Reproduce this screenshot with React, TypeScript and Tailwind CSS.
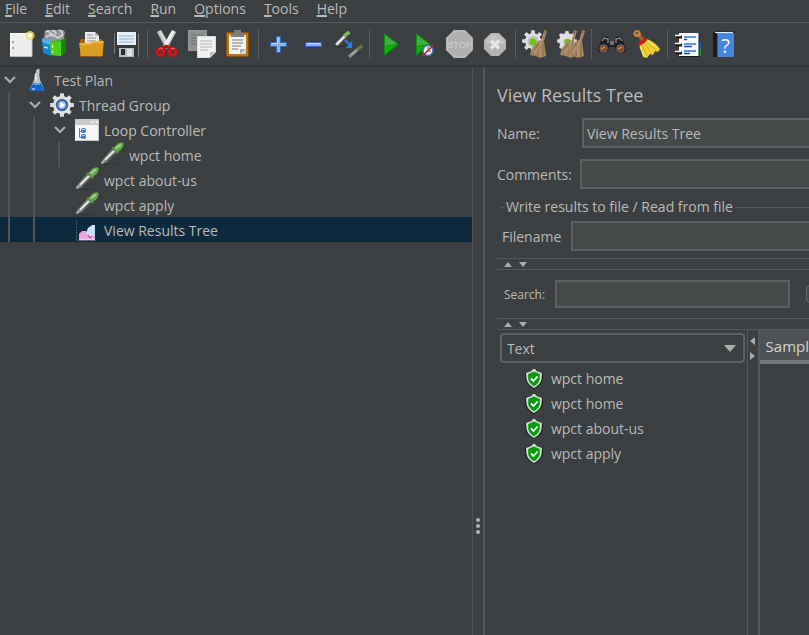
import type { ReactNode } from "react";

const menus = ["File", "Edit", "Search", "Run", "Options", "Tools", "Help"];

function ToolButton({ label, children }: { label: string; children: ReactNode }) {
  return (
    <button type="button" aria-label={label} className="h-[30px] w-[35px] shrink-0">
      <svg viewBox="0 0 35 30" className="h-[30px] w-[35px]" aria-hidden="true">
        {children}
      </svg>
    </button>
  );
}

function Separator() {
  return (
    <div className="flex h-[30px] w-1.5 shrink-0 justify-center">
      <span className="w-px bg-[#5a5c5e]" />
    </div>
  );
}

function gearPoints(cx: number, cy: number, outer: number, inner: number, teeth: number) {
  const points: string[] = [];
  for (let i = 0; i < teeth; i++) {
    const base = (i / teeth) * Math.PI * 2 - Math.PI / 2;
    const steps: [number, number][] = [
      [-0.3, inner],
      [-0.2, outer],
      [0.2, outer],
      [0.3, inner],
    ];
    for (const [offset, radius] of steps) {
      const angle = base + (offset * Math.PI * 2) / teeth;
      points.push(`${(cx + Math.cos(angle) * radius).toFixed(2)},${(cy + Math.sin(angle) * radius).toFixed(2)}`);
    }
  }
  return points.join(" ");
}

function Pipette() {
  return (
    <>
      <path d="M1 20L4 16L13 6L17 10L7 20L2 22Z" fill="#7c807e" />
      <path d="M5 18L14.500 8.500" stroke="#e8eae6" strokeWidth="2" />
      <path d="M6.500 19L15 11" stroke="#4a4e48" strokeWidth="1" />
      <path d="M1.500 21.500L4.500 18.500" stroke="#a9aba9" strokeWidth="1.800" />
      <path d="M12 5.500L18.500 11" stroke="#4d7f3a" strokeWidth="2.600" />
      <path d="M13 6.500L17 2Q22 -1 23.500 1.500Q24 4.500 21 7.500L17 10.500Z" fill="#64a54b" />
      <path d="M15.500 6.500L21 2.500" stroke="#a5d48d" strokeWidth="2" />
      <path d="M3 22.500H18" stroke="#2f3133" strokeWidth="0.900" />
    </>
  );
}

function BristleBrush() {
  return (
    <>
      <path d="M26 1L29 2L26 12L28 27L22 29L18 27L12 26L14 19L20 12L24 11Z" fill="#a58762" />
      <path d="M27 2L24 14M23 14L20 27M25 15L25 27M20 15L15 25" stroke="#806443" strokeWidth="0.800" fill="none" />
      <path d="M26 5L22 17L22 27M20 18L16 24" stroke="#c9ab82" strokeWidth="0.900" fill="none" />
    </>
  );
}

function Toolbar() {
  return (
    <div role="toolbar" aria-label="Main" className="flex h-[42px] items-center overflow-hidden px-1">
      <ToolButton label="New">
        <rect x="6.500" y="4.500" width="21" height="23" fill="#eeeeec" stroke="#fafafa" />
        <path d="M6 27.500H28V5" stroke="#bcbcba" fill="none" />
        <path d="M8 13h2M8 19h2" stroke="#8d8f90" strokeWidth="1.500" />
        <circle cx="26" cy="6.500" r="4.500" fill="#efdf63" opacity="0.800" />
        <circle cx="26" cy="6.500" r="2.200" fill="#fffde0" />
      </ToolButton>
      <ToolButton label="Templates">
        <path d="M5 9L6 2L9 1H24L26 3L25 10L15 14L5 10Z" fill="#8f9496" />
        <path d="M7 3Q9 0 11 4T14 7M13 2Q16 1 17 5M20 1Q24 2 23 6M7 8L13 5L19 9L24 6" stroke="#d3d7d9" strokeWidth="1.600" fill="none" />
        <path d="M3 9L12 12V27L4 24Z" fill="#1688cf" />
        <path d="M3 9L12 12V16L3 13Z" fill="#4eb3ec" />
        <path d="M5 18L9 19" stroke="#b5e3fb" strokeWidth="1.500" />
        <path d="M11 13L22 11L27 9V23L22 27L12 26Z" fill="#2fa60c" />
        <path d="M11 13L22 12V27L12 26Z" fill="#52cf17" />
        <path d="M22 12L27 9V23L22 27Z" fill="#1c8009" />
        <path d="M13.500 16V19M13.500 22V24" stroke="#d4ffb9" strokeWidth="1.300" />
      </ToolButton>
      <ToolButton label="Open">
        <path d="M6 12Q6 10 8 10H26Q29 10 29 13V27H6Z" fill="#9b6a10" />
        <path d="M11 3H21L25 7V18H11Z" fill="#ececec" />
        <path d="M21 3V7H25" fill="#b3b5b6" />
        <path d="M13 6h6M13 9h9M13 12h9" stroke="#8a8d8f" strokeWidth="1.200" />
        <path d="M5 14H16L19 12H30L28 28H7Z" fill="#d99d20" />
        <path d="M6 15H16.500L19.500 13H29" stroke="#f6cf6c" fill="none" />
        <path d="M7 27.500H28" stroke="#8b600c" />
      </ToolButton>
      <ToolButton label="Save">
        <path d="M5 4Q5 3 6 3H29Q30 3 30 4V28H8L5 25Z" fill="#35383b" />
        <path d="M5.500 4V24.500M29.500 4V28" stroke="#7a7e81" />
        <rect x="8" y="3" width="19" height="13" fill="#e9f0f7" />
        <path d="M10 7h15M10 10h15M10 13h15" stroke="#8ab0d4" strokeWidth="1.200" />
        <rect x="10" y="19" width="15" height="9" fill="#b9bbbc" />
        <rect x="12" y="20" width="4" height="6" fill="#292b2d" />
        <path d="M18 20h5v7h-5z" fill="#dfe0e0" />
      </ToolButton>
      <Separator />
      <ToolButton label="Cut">
        <path d="M7 3L11 1L20 17L16 20Z" fill="#d4d6d6" />
        <path d="M26 3L22 1L13 17L17 20Z" fill="#f0f1f1" />
        <path d="M8 3L16 18M25 3L17 18" stroke="#959899" strokeWidth="0.700" />
        <path d="M12 20Q16.500 15 21 20" stroke="#b80f0f" strokeWidth="3.500" fill="none" />
        <ellipse cx="10.500" cy="23" rx="3.200" ry="3.500" fill="none" stroke="#d01515" strokeWidth="3" />
        <ellipse cx="22.500" cy="23" rx="3.200" ry="3.500" fill="none" stroke="#d01515" strokeWidth="3" />
        <path d="M9 20Q11 18 13 20M21 20Q23 18 25 20" stroke="#ff6b65" fill="none" />
      </ToolButton>
      <ToolButton label="Copy">
        <rect x="3.500" y="1.500" width="18" height="20" fill="#8f9293" stroke="#979a9b" />
        <path d="M6 6h12M6 9h12M6 12h10M6 15h7" stroke="#696c6e" strokeWidth="1" />
        <path d="M12.500 7.500H30.500V23L25 28.500H12.500Z" fill="#f1f1f0" stroke="#dcdddc" />
        <path d="M15 12h12M15 15h12M15 18h12M15 21h8" stroke="#b4b6b7" strokeWidth="1" />
        <path d="M25 28V23H30Z" fill="#bfc1c0" />
      </ToolButton>
      <ToolButton label="Paste">
        <rect x="6.500" y="3.500" width="22" height="24" rx="1" fill="#b97712" stroke="#835007" />
        <rect x="9" y="6" width="17" height="19" fill="#d9d9d8" />
        <path d="M11 4H14V1H21V4H24V8H11Z" fill="#7b7f80" />
        <path d="M9 8H26V20L21 25H9Z" fill="#f4f4f4" />
        <path d="M12 11h11M12 14h11M12 17h9M12 20h6" stroke="#75797b" strokeWidth="1.200" />
        <path d="M20 25V20H26Z" fill="#a9abab" />
      </ToolButton>
      <Separator />
      <ToolButton label="Expand all">
        <path d="M15.500 7.500H19.500V13.500H25.500V17.500H19.500V23.500H15.500V17.500H9.500V13.500H15.500Z" fill="#8cb4e6" stroke="#2f68b4" />
        <path d="M16.500 9V14.500H11" stroke="#c5dcf7" fill="none" />
      </ToolButton>
      <ToolButton label="Collapse all">
        <rect x="9.500" y="13.500" width="16" height="4" fill="#8cb4e6" stroke="#2f68b4" />
        <path d="M11 14.500H24" stroke="#c5dcf7" />
      </ToolButton>
      <ToolButton label="Toggle">
        <path d="M5 16L15 6" stroke="#8b8e8c" strokeWidth="3.500" />
        <path d="M5.500 15.500L15 6" stroke="#eef0ec" strokeWidth="1.800" />
        <path d="M13 7L18.500 3" stroke="#79b75b" strokeWidth="3.600" />
        <path d="M6 17.500H15" stroke="#242628" />
        <path d="M14 11L19 16" stroke="#2a7df0" strokeWidth="2" />
        <path d="M21 12V19H14.500Z" fill="#2a7df0" />
        <path d="M18 28L27 20" stroke="#818482" strokeWidth="3.500" />
        <path d="M20 26L27 20" stroke="#b0b3b0" strokeWidth="1.500" />
        <path d="M26 21L31 16.500" stroke="#577b49" strokeWidth="3.600" />
      </ToolButton>
      <Separator />
      <ToolButton label="Start">
        <path d="M12 4L27 15.500L12 27Z" fill="#079307" />
        <path d="M13 6L25 15L13 17Z" fill="#3fae3f" />
        <path d="M13 18L24 16L13 25Z" fill="#08b808" />
      </ToolButton>
      <ToolButton label="Start no pauses">
        <path d="M9 4L24 15.500L9 27Z" fill="#079307" />
        <path d="M10 6L22 15L10 17Z" fill="#3fae3f" />
        <path d="M10 18L17 17L10 25Z" fill="#08b808" />
        <circle cx="21" cy="21.500" r="5" fill="#eef2f6" stroke="#3d79bd" strokeWidth="1.500" />
        <path d="M21 18V22H24" stroke="#2c5c94" fill="none" />
        <path d="M15.500 27L26.500 16" stroke="#dc2020" strokeWidth="1.700" />
      </ToolButton>
      <ToolButton label="Stop">
        <path d="M12 1H23L31 9V21L23 29H12L4 21V9Z" fill="#b9b9b9" />
        <path d="M12.500 2.500H22.500L29.500 9.500V20.500L22.500 27.500H12.500L5.500 20.500V9.500Z" fill="#b0b0b0" stroke="#bdbdbd" />
        <text x="17.500" y="19" textAnchor="middle" fontSize="9" fontWeight="700" fontFamily="'Liberation Sans', sans-serif" fill="#c9c9c9">
          STOP
        </text>
      </ToolButton>
      <ToolButton label="Shutdown">
        <path d="M14 4H22L29 11V20L22 27H14L7 20V11Z" fill="#b4b4b4" />
        <path d="M14.500 5.500H21.500L27.500 11.500V15H8.500V11.500Z" fill="#c1c1c1" />
        <path d="M14 11.500L22 19.500M22 11.500L14 19.500" stroke="#e5e5e5" strokeWidth="3.200" />
      </ToolButton>
      <Separator />
      <ToolButton label="Clear">
        <polygon points={gearPoints(15, 12, 11, 8, 8)} fill="#dedede" />
        <circle cx="15" cy="12.500" r="5.500" fill="#bfc1c1" />
        <BristleBrush />
        <circle cx="15" cy="13" r="3.500" fill="#72c312" />
      </ToolButton>
      <ToolButton label="Clear all">
        <polygon points={gearPoints(14, 12, 10, 8, 8)} fill="#dedede" />
        <circle cx="14.500" cy="13" r="3.300" fill="#72c312" />
        <g transform="translate(-5 0)">
          <BristleBrush />
        </g>
        <g transform="translate(3 0)">
          <BristleBrush />
        </g>
      </ToolButton>
      <Separator />
      <ToolButton label="Search">
        <path d="M8 9Q10 6 14 8L16 12H20L22 8Q26 6 28 9L32 19Q32 24 27 24Q22 24 21 18H15Q14 24 9 24Q4 24 4 19Z" fill="#1d1f20" />
        <path d="M8 12L10 9L14 10V14M22 14V10L26 9L28 12" stroke="#85888a" strokeWidth="1.300" fill="none" />
        <rect x="16" y="12" width="4" height="4" fill="#707376" />
        <circle cx="9.500" cy="19.500" r="3.800" fill="#8b4a20" stroke="#696c6d" />
        <circle cx="26.500" cy="19.500" r="3.800" fill="#8b4a20" stroke="#696c6d" />
        <path d="M7 20L11 18M24 20L28 18" stroke="#d4925e" strokeWidth="1.300" />
      </ToolButton>
      <ToolButton label="Reset search">
        <path d="M9 4L14 12" stroke="#9a6524" strokeWidth="4" />
        <circle cx="8" cy="4.500" r="3.500" fill="#c5883b" />
        <circle cx="8" cy="4" r="1.300" fill="#71441a" />
        <path d="M10 15L18 10Q26 13 31 20L29 23L26 22L24 26L21 25L18 29L14 28Z" fill="#efd12f" />
        <path d="M13 16L18 27M16 14L22 24M18 13L27 21" stroke="#c2a31c" strokeWidth="0.800" fill="none" />
        <path d="M11 18L15 27M19 12L28 19" stroke="#fff384" fill="none" />
        <path d="M9.500 15Q14 14 17 9.500" stroke="#d31818" strokeWidth="3.500" fill="none" />
      </ToolButton>
      <Separator />
      <ToolButton label="Function helper">
        <rect x="26" y="13" width="5" height="7" fill="#1760c5" />
        <rect x="26" y="20" width="5" height="7" fill="#15962a" />
        <rect x="9" y="4" width="20" height="24" fill="#fbfbfb" />
        <path d="M29 4V27.500H9" stroke="#171819" fill="none" />
        <path d="M14 8H26M14 15H26M14 22H26" stroke="#2579ea" strokeWidth="1.300" />
        <path d="M14 10.500H17M14 17.500H22M14 24.500H20" stroke="#174ba1" strokeWidth="1.300" />
        <path d="M6 8H12M6 16H12M6 24H12" stroke="#171819" strokeWidth="3" />
        <path d="M5 6.500H11M5 14.500H11M5 22.500H11" stroke="#f3f3f3" strokeWidth="1.700" />
      </ToolButton>
      <ToolButton label="Help">
        <path d="M8 4L11 2H29V27L26 28H8Z" fill="#17191b" />
        <rect x="12" y="4" width="17" height="24" fill="#4386df" />
        <path d="M10 3.500H28" stroke="#e8ebed" strokeWidth="1.200" />
        <path d="M12.500 5V28" stroke="#2a62b1" />
        <text x="20.500" y="24" textAnchor="middle" fontSize="20" fontFamily="'Open Sans', sans-serif" fill="#f6f9ff">
          ?
        </text>
      </ToolButton>
    </div>
  );
}

type NodeKind = "plan" | "threads" | "loop" | "sampler" | "listener";

const nodes: { label: string; kind: NodeKind; depth: number; open?: boolean; selected?: boolean }[] = [
  { label: "Test Plan", kind: "plan", depth: 0, open: true },
  { label: "Thread Group", kind: "threads", depth: 1, open: true },
  { label: "Loop Controller", kind: "loop", depth: 2, open: true },
  { label: "wpct home", kind: "sampler", depth: 3 },
  { label: "wpct about-us", kind: "sampler", depth: 2 },
  { label: "wpct apply", kind: "sampler", depth: 2 },
  { label: "View Results Tree", kind: "listener", depth: 2, selected: true },
];

function NodeIcon({ kind }: { kind: NodeKind }) {
  return (
    <svg viewBox="0 0 25 25" className="h-[25px] w-[25px] shrink-0" aria-hidden="true">
      {kind === "plan" && (
        <>
          <path d="M10 6H14L15 13L19 22Q19 24 17 24H7Q5 24 5 22L9 13Z" fill="#b8c3ca" />
          <path d="M12.500 2H14.500V7H11V4Z" fill="#c3c7c9" />
          <path d="M8.500 16H15.500L19 22Q19 24 17 24H7Q5 24 5 22Z" fill="#1267c9" />
          <path d="M9 17H15" stroke="#72b2f4" strokeWidth="1.500" />
          <path d="M11 7V14M7 22H10" stroke="#f2f6f8" strokeWidth="1.200" />
        </>
      )}
      {kind === "threads" && (
        <>
          <polygon points={gearPoints(12, 13, 12, 9, 8)} fill="#dcdee0" />
          <circle cx="12" cy="13" r="7.500" fill="#e9ecef" />
          <circle cx="12" cy="13" r="5" fill="#b5c7df" stroke="#3f69a8" strokeWidth="2.600" />
          <path d="M10.500 10L15 13L10.500 16Z" fill="#fff" />
        </>
      )}
      {kind === "loop" && (
        <>
          <rect x="0" y="2" width="24" height="22" fill="#f6f6f6" />
          <rect x="0" y="2" width="24" height="6" fill="#c9c9cd" />
          <path d="M16 5h2M19 5h1M21 5h2" stroke="#fff" strokeWidth="1.300" />
          <path d="M23.500 8V23.500H0" stroke="#c6c7ca" fill="none" />
          <path d="M4.500 11V20.500H7M4.500 14.500H7" stroke="#6e7c90" fill="none" />
          <rect x="6" y="11" width="5" height="5" rx="2" fill="#3d7ecf" />
          <rect x="6" y="17" width="5" height="5" rx="2" fill="#3d7ecf" />
          <path d="M7 12.500H10M7 18.500H10" stroke="#a8cbf3" />
        </>
      )}
      {kind === "sampler" && <Pipette />}
      {kind === "listener" && (
        <>
          <path d="M1.500 3V23.500H21" stroke="#4b5863" fill="none" strokeDasharray="2 1" />
          <path d="M4 23V17L7 14L11 14L14 18L20 13V23Z" fill="#efa4e2" />
          <path d="M11 16L13 11L17 8H20V17L17 20L14 19Z" fill="#c7e0fa" />
          <path d="M4 22.500H20" stroke="#f5c6ef" strokeWidth="1.500" />
          <path d="M13 18L15 21L17 19" stroke="#b32681" fill="none" />
        </>
      )}
    </svg>
  );
}

function TestTree() {
  return (
    <ul role="tree" aria-label="Test plan elements">
      {nodes.map((node, index) => (
        <li
          key={index}
          role="treeitem"
          aria-level={node.depth + 1}
          aria-selected={node.selected ?? false}
          className={node.selected ? "flex h-[25px] items-center bg-[#0d293e]" : "flex h-[25px] items-center"}
        >
          {Array.from({ length: node.depth }, (_, level) => (
            <span key={level} className="flex h-full w-[25px] shrink-0 pl-2">
              <span className="w-0.5 bg-[#515456]" />
            </span>
          ))}
          <span className="flex w-[25px] shrink-0 pl-1">
            {node.open && (
              <svg viewBox="0 0 12 8" className="h-2 w-3" aria-hidden="true">
                <path d="M1 1L6 6L11 1" fill="none" stroke="#adadad" strokeWidth="2.200" />
              </svg>
            )}
          </span>
          <NodeIcon kind={node.kind} />
          <span className="ml-1 truncate pt-0.5">{node.label}</span>
        </li>
      ))}
    </ul>
  );
}

function CollapseBar() {
  return (
    <div className="flex h-3 items-center gap-[7px] border-y border-[#555759] pl-[7px]">
      <svg viewBox="0 0 8 5" className="h-[5px] w-2" aria-hidden="true">
        <path d="M0 5L4 0L8 5Z" fill="#adadad" />
      </svg>
      <svg viewBox="0 0 8 5" className="h-[5px] w-2" aria-hidden="true">
        <path d="M0 0L4 5L8 0Z" fill="#adadad" />
      </svg>
    </div>
  );
}

function Shield() {
  return (
    <svg viewBox="0 0 18 20" className="h-5 w-[18px] shrink-0" aria-hidden="true">
      <path d="M9 0L11 2L18 4V9Q18 16 9 20Q0 16 0 9V4L7 2Z" fill="#222426" />
      <path d="M8 0H10L11.500 2L17 4L16.500 10Q15.500 15.500 9 19Q2.500 15.500 1.500 10L1 4L6.500 2Z" fill="#d3ddd3" />
      <path d="M9 2.500L14.800 5V10Q14 14.500 9 17.300Q4 14.500 3.200 10V5Z" fill="#079b0c" />
      <path d="M6 9.500L8.500 12L12.500 7.500" fill="none" stroke="#fff" strokeWidth="1.800" />
    </svg>
  );
}

const results = ["wpct home", "wpct home", "wpct about-us", "wpct apply"];
const field = "min-w-0 border-2 border-[#5e6061] bg-[#45494a] outline-none";

export default function App() {
  return (
    <div className="flex min-h-screen flex-col overflow-hidden bg-[#3c3f41] font-['Open_Sans','Noto_Sans',sans-serif] text-sm text-[#bbbbbb]">
      <nav aria-label="Application" className="flex h-[23px] gap-[18px] border-b border-[#555759] pl-[5px]">
        {menus.map((menu) => (
          <button key={menu} type="button" className="h-[18px] leading-[18px]">
            <span className="underline decoration-2 underline-offset-1">{menu[0]}</span>
            {menu.slice(1)}
          </button>
        ))}
      </nav>
      <Toolbar />
      <main className="flex grow border-t-2 border-[#323537]">
        <section aria-label="Test plan" className="w-7/12 shrink-0">
          <TestTree />
        </section>
        <div
          role="separator"
          aria-orientation="vertical"
          className="flex w-[13px] shrink-0 flex-col items-center gap-0.5 border-r-2 border-l border-r-[#555555] border-l-[#555555] pt-[451px]"
        >
          <span className="size-1 rounded-full bg-[#b4b6b8]" />
          <span className="size-1 rounded-full bg-[#b4b6b8]" />
          <span className="size-1 rounded-full bg-[#b4b6b8]" />
        </div>
        <section aria-label="View Results Tree" className="flex min-w-0 grow flex-col pl-3">
          <h1 className="mt-4 h-6 truncate text-lg leading-6">View Results Tree</h1>
          <div className="mt-[11px] flex h-[30px]">
            <label htmlFor="name" className="w-[85px] shrink-0 leading-8">
              Name:
            </label>
            <input id="name" defaultValue="View Results Tree" className={`${field} grow border-r-0 px-[3px] pt-0.5`} />
          </div>
          <div className="mt-[11px] flex h-[30px]">
            <label htmlFor="comments" className="w-[83px] shrink-0 leading-8">
              Comments:
            </label>
            <input id="comments" className={`${field} grow border-r-0`} />
          </div>
          <fieldset className="mt-[7px] ml-1 min-w-0 border-t border-[#555759]">
            <legend className="ml-[3px] px-0.5 leading-[22px]">Write results to file / Read from file</legend>
            <div className="mt-[3px] flex h-[30px] pl-px">
              <label htmlFor="filename" className="w-[69px] shrink-0 leading-8">
                Filename
              </label>
              <input id="filename" className={`${field} grow border-r-0`} />
            </div>
          </fieldset>
          <div className="mt-[7px]">
            <CollapseBar />
          </div>
          <div className="mt-2.5 flex h-7 items-center">
            <label htmlFor="search" className="w-[58px] shrink-0 pt-0.5 pl-[7px] text-xs">
              Search:
            </label>
            <input id="search" className={`${field} h-7 grow`} />
            <div className="flex w-[19px] shrink-0 overflow-hidden pl-4">
              <input
                type="checkbox"
                aria-label="Case sensitive"
                className="size-[18px] shrink-0 appearance-none rounded-sm border border-[#6b6b6b] bg-[#43494a]"
              />
            </div>
          </div>
          <div className="mt-2.5">
            <CollapseBar />
          </div>
          <div className="flex min-h-0 grow">
            <div className="w-4/5 shrink-0">
              <div className="relative mt-[3px] mr-0.5 ml-[3px] h-[30px]">
                <select
                  aria-label="Renderer"
                  className="size-full appearance-none rounded border-2 border-[#5e6061] bg-[#3c3f41] pt-0.5 pl-[5px] outline-none"
                >
                  <option>Text</option>
                </select>
                <svg viewBox="0 0 12 7" className="pointer-events-none absolute top-3 right-[9px] h-[7px] w-3" aria-hidden="true">
                  <path d="M0 0H12L6 7Z" fill="#adadad" />
                </svg>
              </div>
              <ul aria-label="Results" className="mt-[3px]">
                {results.map((result, index) => (
                  <li key={index} className="flex h-[25px] items-center gap-2 pl-7">
                    <Shield />
                    {result}
                  </li>
                ))}
              </ul>
            </div>
            <div
              role="separator"
              aria-orientation="vertical"
              className="flex w-[13px] shrink-0 flex-col items-center gap-[7px] border-r-2 border-l border-[#555759] pt-[7px]"
            >
              <svg viewBox="0 0 5 8" className="h-2 w-[5px]" aria-hidden="true">
                <path d="M5 0V8L0 4Z" fill="#adadad" />
              </svg>
              <svg viewBox="0 0 5 8" className="h-2 w-[5px]" aria-hidden="true">
                <path d="M0 0V8L5 4Z" fill="#adadad" />
              </svg>
            </div>
            <div role="tablist" className="flex min-w-0 grow items-start overflow-hidden">
              <button
                type="button"
                role="tab"
                aria-selected="true"
                className="h-[34px] shrink-0 border-b-4 border-[#747a80] bg-[#4e5254] px-1.5 pt-1 text-[15px] whitespace-nowrap text-[#d4d4d4]"
              >
                Sampler result
              </button>
            </div>
          </div>
        </section>
      </main>
    </div>
  );
}
